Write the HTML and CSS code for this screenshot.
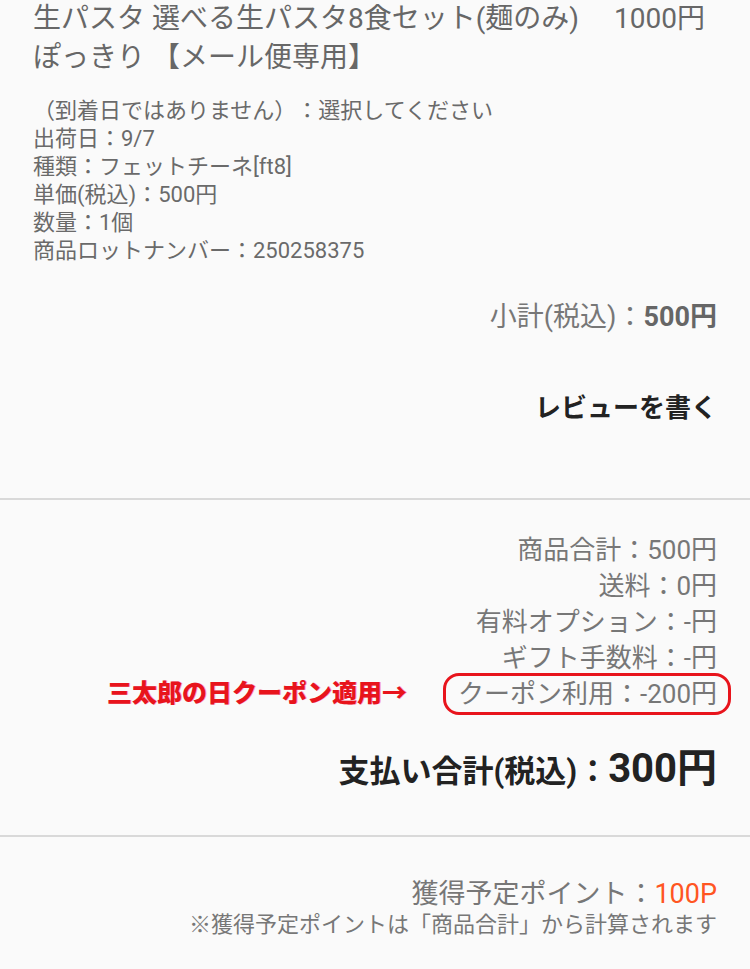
FILE: index.html
```html
<!DOCTYPE html>
<html lang="ja">
<head>
  <meta charset="UTF-8">
  <meta name="viewport" content="width=device-width, initial-scale=1.0">
  <title>注文詳細</title>
  <link rel="stylesheet" href="styles.css">
</head>
<body>
  <div class="page">
    <!-- item -->
    <div class="item">
      <h1 class="item-title">生パスタ 選べる生パスタ8食セット(麺のみ)　 1000円ぽっきり 【メール便専用】</h1>
      <div class="item-details">
        <p>（到着日ではありません）：選択してください</p>
        <p>出荷日：9/7</p>
        <p>種類：フェットチーネ[ft8]</p>
        <p>単価(税込)：500円</p>
        <p>数量：1個</p>
        <p>商品ロットナンバー：250258375</p>
      </div>
      <p class="subtotal">小計(税込)：<strong>500円</strong></p>
      <p class="review">レビューを書く</p>
    </div>

    <!-- summary -->
    <div class="summary">
      <p class="row">商品合計：500円</p>
      <p class="row">送料：0円</p>
      <p class="row">有料オプション：-円</p>
      <p class="row">ギフト手数料：-円</p>
      <div class="row coupon-row">
        <span class="note-red">三太郎の日クーポン適用→</span>
        <span class="coupon-box">クーポン利用：-200円</span>
      </div>
      <p class="total">支払い合計(税込)：<span class="total-amount">300円</span></p>
    </div>

    <!-- points -->
    <div class="points">
      <p class="points-row">獲得予定ポイント：<span class="points-value">100P</span></p>
      <p class="points-note">※獲得予定ポイントは「商品合計」から計算されます</p>
    </div>
  </div>
</body>
</html>
```

FILE: styles.css
```css
body {
  margin: 0;
  background: #fafafa;
  font-family: Roboto, "Noto Sans CJK JP", sans-serif;
  color: #666;
  text-spacing-trim: space-all;
}
p {
  margin: 0;
}
.page {
  width: 750px;
}
.item {
  padding: 0 33px;
}
.item-title {
  margin: -1px 0 0;
  font-size: 28px;
  font-weight: normal;
  line-height: 39px;
  color: #676767;
}
.item-details {
  margin-top: 20px;
  font-size: 22px;
  line-height: 28px;
  color: #6a6a6a;
}
.subtotal {
  margin-top: 34px;
  text-align: right;
  font-size: 27px;
  line-height: 36px;
  color: #777;
}
.subtotal strong {
  color: #666;
}
.review {
  margin-top: 55px;
  margin-bottom: 72px;
  text-align: right;
  font-size: 26px;
  font-weight: bold;
  line-height: 36px;
  color: #222;
}
.summary {
  border-top: 2px solid #d9d9d9;
  padding: 32px 33px 39px;
}
.row {
  text-align: right;
  font-size: 26px;
  line-height: 36px;
  color: #777;
}
.coupon-row {
  display: flex;
  justify-content: flex-end;
  align-items: center;
  gap: 36px;
}
.note-red {
  font-size: 25px;
  font-weight: 900;
  color: #e8141c;
  text-shadow: 1px 0 0 rgba(240, 80, 160, 0.5);
}
.coupon-box {
  border: 3px solid #e8141c;
  border-radius: 16px;
  padding: 0 11px 0 12px;
  margin: -3px -14px -3px 0;
  line-height: 36px;
}
.total {
  margin-top: 33px;
  text-align: right;
  font-size: 31px;
  font-weight: bold;
  line-height: 48px;
  color: #222;
}
.total-amount {
  font-size: 40px;
}
.points {
  border-top: 2px solid #d9d9d9;
  padding: 39px 33px 40px;
  text-align: right;
  color: #777;
}
.points-row {
  font-size: 27px;
  line-height: 36px;
}
.points-value {
  color: #ff5522;
}
.points-note {
  font-size: 22px;
  line-height: 26px;
}
```
